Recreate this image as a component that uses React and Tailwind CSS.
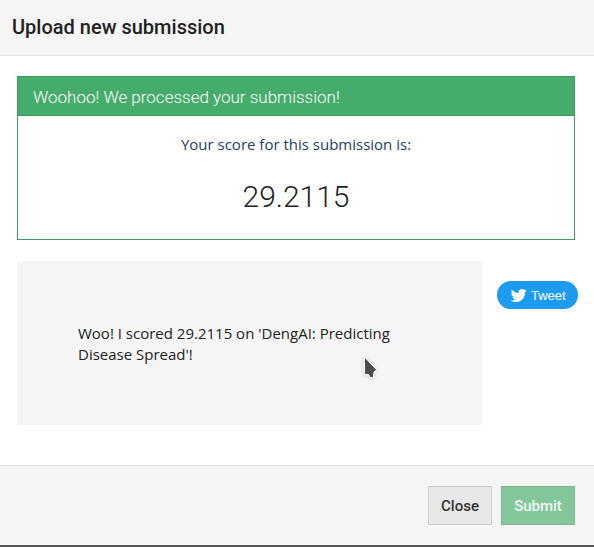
const heading = "font-[Roboto,'Open_Sans',sans-serif]";

function TwitterBird() {
  return (
    <svg viewBox="0 0 24 24" className="size-[17px] fill-white" aria-hidden="true">
      <path d="M23.643 4.937c-.835.37-1.732.62-2.675.733.962-.576 1.7-1.49 2.048-2.578-.9.534-1.897.922-2.958 1.13-.85-.904-2.06-1.47-3.4-1.47-2.572 0-4.658 2.086-4.658 4.66 0 .364.042.718.12 1.06-3.873-.195-7.304-2.05-9.602-4.868-.4.69-.63 1.49-.63 2.342 0 1.616.823 3.043 2.072 3.878-.764-.025-1.482-.234-2.11-.583v.06c0 2.257 1.605 4.14 3.737 4.568-.392.106-.803.162-1.227.162-.3 0-.593-.028-.877-.082.593 1.85 2.313 3.198 4.352 3.234-1.595 1.25-3.604 1.995-5.786 1.995-.376 0-.747-.022-1.112-.065 2.062 1.323 4.51 2.093 7.14 2.093 8.57 0 13.255-7.098 13.255-13.254 0-.2-.005-.402-.014-.602.91-.658 1.7-1.477 2.323-2.41z" />
    </svg>
  );
}

function Pointer() {
  return (
    <svg
      viewBox="0 0 16 24"
      className="absolute top-[95px] left-[346px] h-6 w-4 drop-shadow-sm"
      aria-hidden="true"
    >
      <path
        d="M1.500 1v17.500h4l1.500 3h3.500v-4.500l3-3.500z"
        fill="#4d4d4d"
        stroke="#fff"
        strokeWidth="1"
      />
    </svg>
  );
}

export default function App() {
  return (
    <div className="border-b-2 border-[#555] bg-white font-['Open_Sans',sans-serif] text-[15px] leading-[21px] text-[#222]">
      <header className="border-b border-[#e5e5e5] bg-[#f5f5f5] px-3 py-[14px]">
        <h1 className={`${heading} text-xl leading-[27px] font-medium`}>Upload new submission</h1>
      </header>

      <main className="pt-5 pr-[19px] pb-10 pl-[17px]">
        <section className="border border-[#3c9a5f]">
          <h2
            className={`${heading} border-b border-[#3c9a5f] bg-[#45ac6b] px-[15px] pt-[9px] pb-[7px] text-[17px] leading-[22px] font-light text-white`}
          >
            Woohoo! We processed your submission!
          </h2>
          <div className="pt-[18px] pb-[22px] text-center">
            <p className="text-[#22405f]">Your score for this submission is:</p>
            <p className={`${heading} mt-[22px] text-[30px] leading-10 font-light`}>29.2115</p>
          </div>
        </section>

        <div className="mt-[21px] flex items-start">
          <div className="relative w-10/12 shrink-0 bg-[#f5f5f5] px-[61px] pt-[62px] pb-[60px]">
            <p>Woo! I scored 29.2115 on &#39;DengAI: Predicting Disease Spread&#39;!</p>
            <Pointer />
          </div>
          <button
            type="button"
            className="mt-5 ml-[15px] flex h-7 shrink-0 items-center gap-1 rounded-full bg-[#1d9bf0] px-3 pl-[13px] font-['Liberation_Sans',sans-serif] text-[13px] text-white"
          >
            <TwitterBird />
            Tweet
          </button>
        </div>
      </main>

      <footer
        className={`${heading} flex justify-end gap-[9px] border-t border-[#e5e5e5] bg-[#f5f5f5] py-5 pr-[19px] text-[15px] font-medium`}
      >
        <button type="button" className="h-[39px] w-16 border border-[#ccc] bg-[#e7e7e7] pt-[2px] text-[#333]">
          Close
        </button>
        <button
          type="button"
          disabled
          className="h-[39px] w-[74px] border border-[#7db892] bg-[#83c79b] pt-[2px] text-[#f0f8f3]"
        >
          Submit
        </button>
      </footer>
    </div>
  );
}
